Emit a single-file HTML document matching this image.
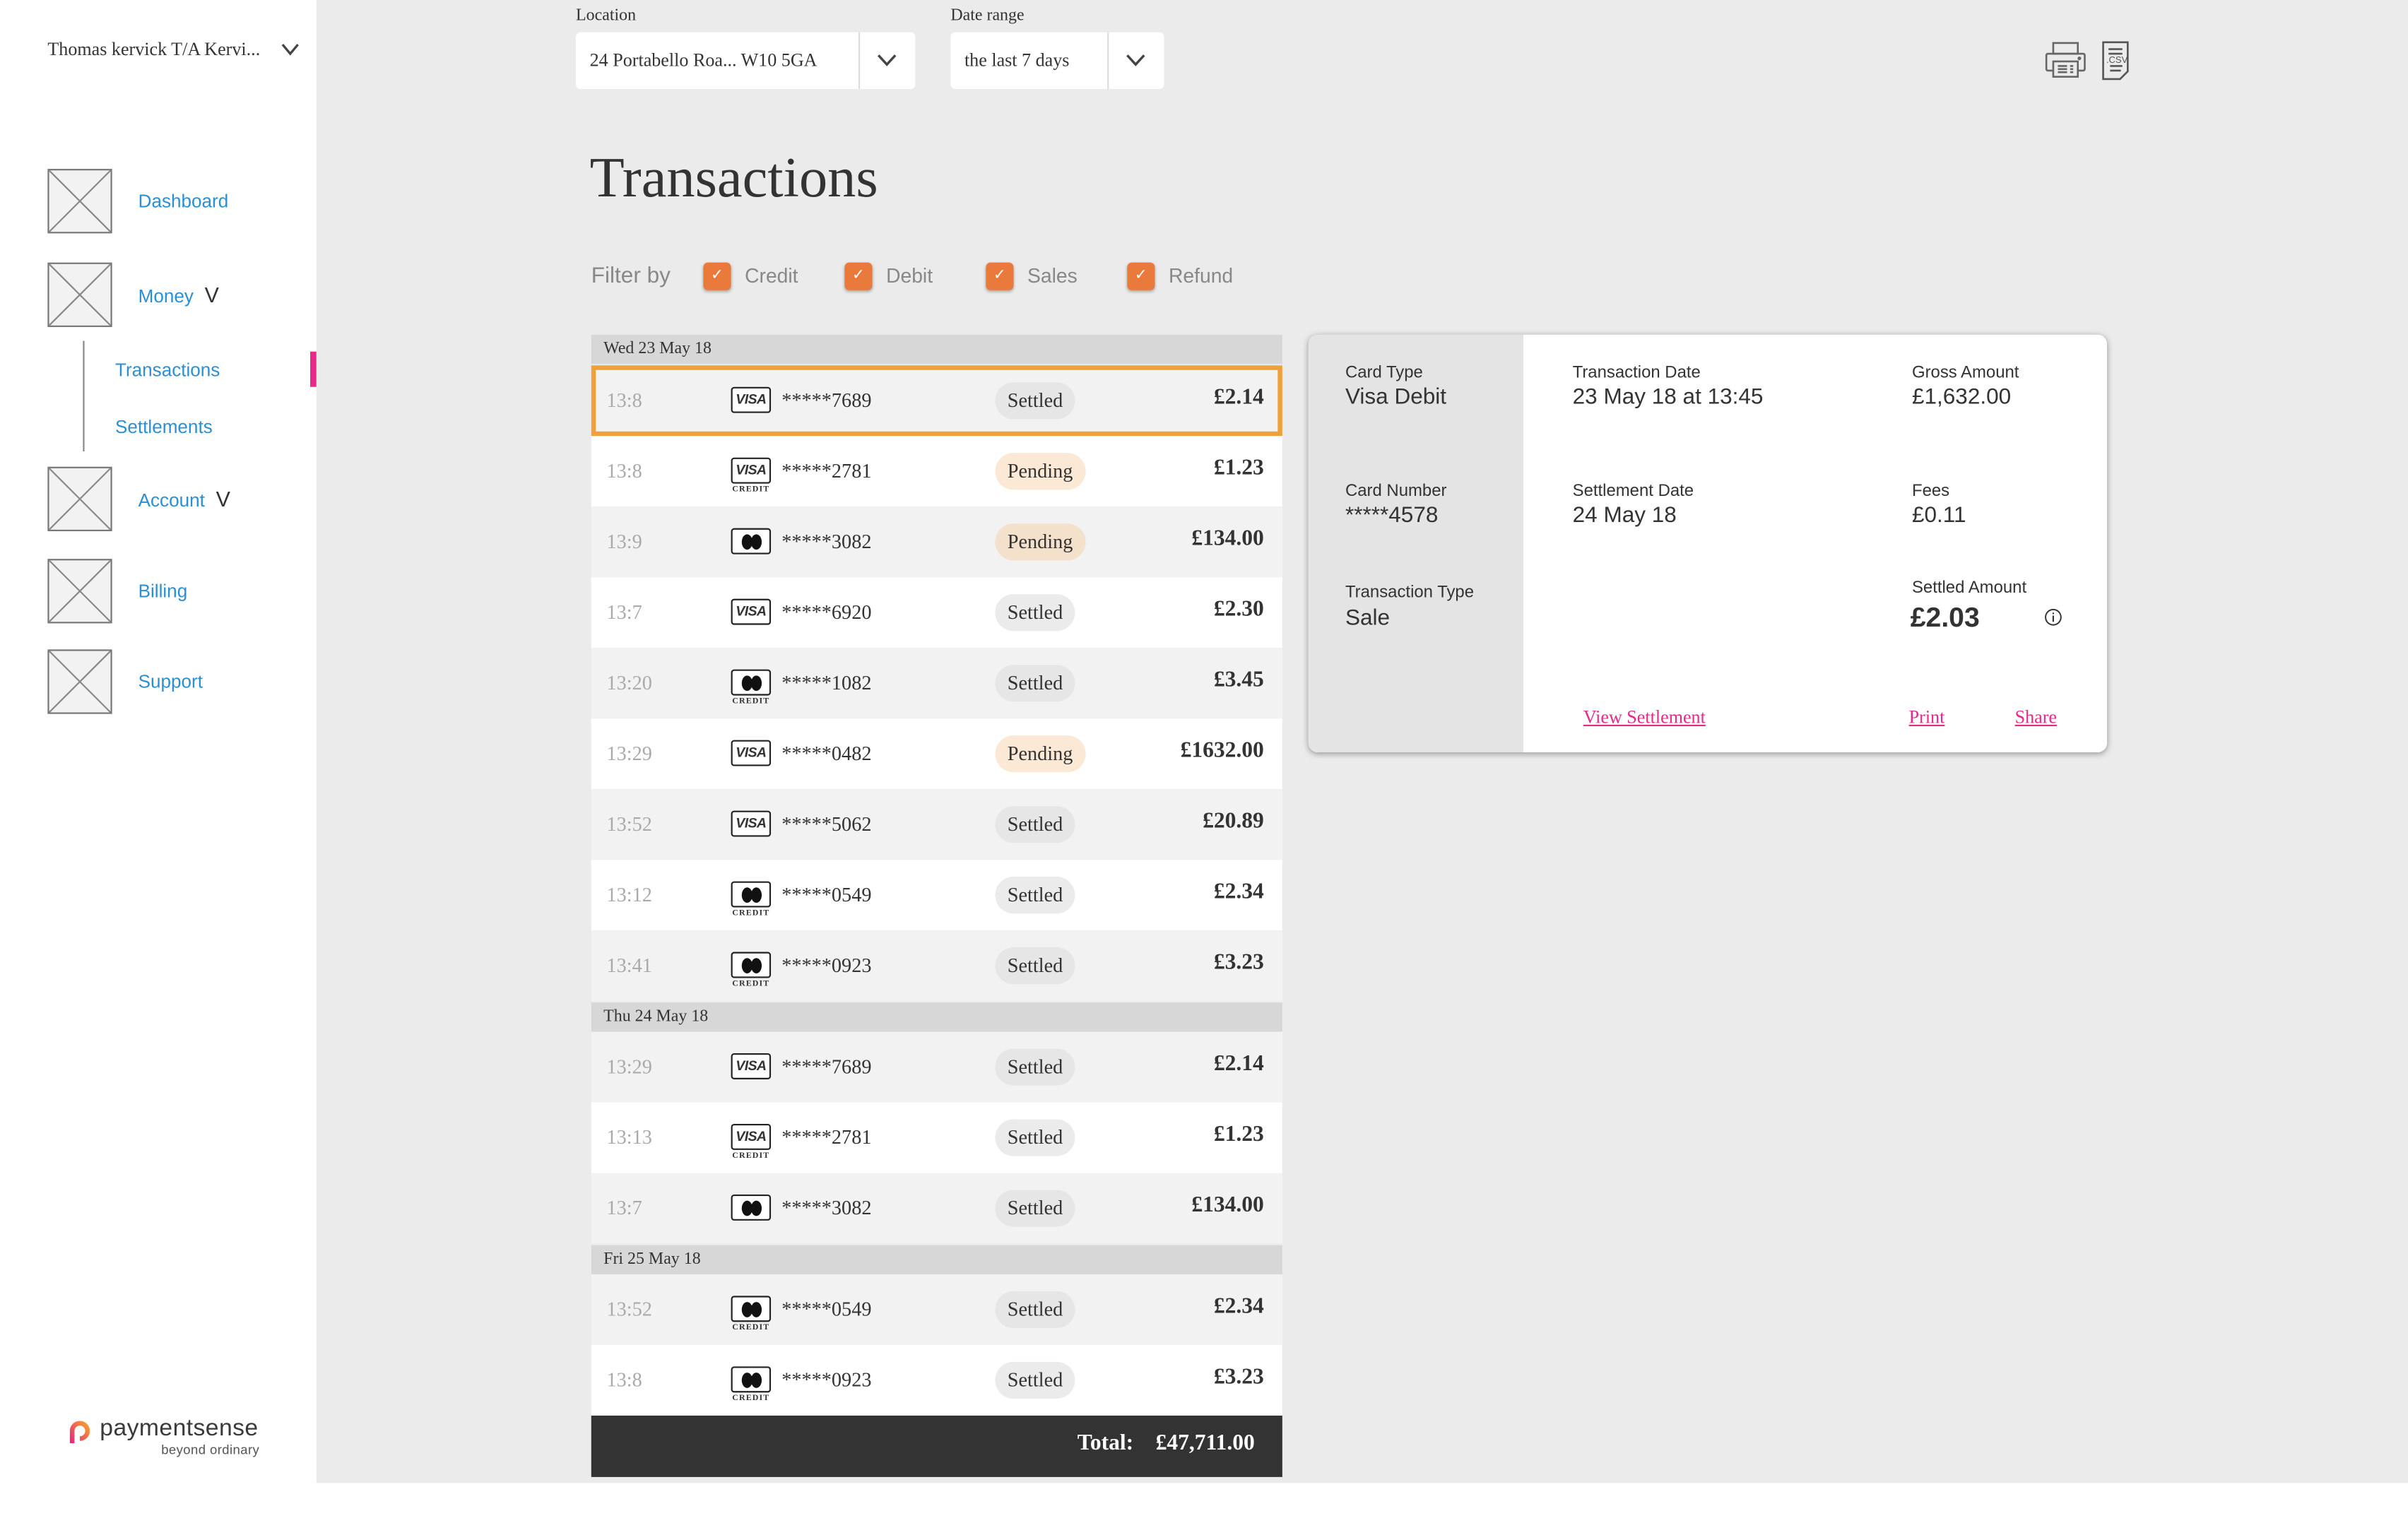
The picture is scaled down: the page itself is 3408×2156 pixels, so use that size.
<!DOCTYPE html>
<html><head><meta charset="utf-8">
<style>
*{margin:0;padding:0;box-sizing:border-box}
html,body{width:3408px;height:2156px;overflow:hidden;background:#fff}
#w{position:absolute;left:0;top:0;width:1568px;height:992px;transform:scale(2.17347);transform-origin:0 0;font-family:"Liberation Serif",serif;color:#333}
.a{position:absolute}
.sans{font-family:"Liberation Sans",sans-serif}
.ph{position:absolute;left:31px;width:42px;height:42px;border:1px solid #777;background:#f2f2f2}
.nav{position:absolute;left:90px;font-family:"Liberation Sans",sans-serif;font-size:12px;color:#2a8fd4}
.sel{position:absolute;top:21px;height:37px;background:#fff;border-radius:3px;font-size:12px;line-height:37px;padding-left:9px}
.cb{position:absolute;top:171px;width:18px;height:18px;background:#ea7a3c;border-radius:3px;box-shadow:0 1px 2px rgba(0,0,0,.3);color:#fff;font-size:10px;text-align:center;line-height:18px;font-family:"Liberation Sans",sans-serif}
.cl{position:absolute;top:172px;font-family:"Liberation Sans",sans-serif;font-size:13px;color:#888}
.dh{position:absolute;left:385px;width:450px;height:19px;background:#d7d7d7;font-size:11px;line-height:19px;padding-left:8px}
.r{position:absolute;left:385px;width:450px;height:46px}
.g{background:#f2f2f2}.wh{background:#fff}
.r .t{position:absolute;left:10px;top:15px;font-size:13px;color:#aaa}
.r .c{position:absolute;left:91px;top:14px;width:26px;height:17px;border:1px solid #222;border-radius:2px;background:#fff;font-family:"Liberation Sans",sans-serif;font-weight:bold;font-style:italic;font-size:9px;text-align:center;line-height:15px;letter-spacing:-.3px}
.r .mc i{position:absolute;top:2.5px;width:7px;height:10px;border-radius:50%;background:#111}
.r .cr{position:absolute;left:91px;top:32px;width:26px;text-align:center;font-size:5.5px;letter-spacing:.5px;font-weight:bold;color:#333}
.r .n{position:absolute;left:124px;top:15px;font-size:13px}
.r .s{position:absolute;left:263px;top:11px;height:24px;line-height:24px;padding:0 8px;border-radius:12px;font-size:13px;background:#e6e6e6}
.r .s.p{background:#fbe9d6}
.r .m{position:absolute;right:12px;top:13px;font-size:14.5px;font-weight:bold}
.lb{position:absolute;font-family:"Liberation Sans",sans-serif;font-size:11px;color:#333}
.vl{position:absolute;font-family:"Liberation Sans",sans-serif;font-size:14.5px;color:#333}
.lk{position:absolute;top:460px;font-size:12px;color:#e8288a;text-decoration:underline}
</style></head><body><div id="w">
<div class="a" style="left:206px;top:0;width:1362px;height:966px;background:#ebebeb"></div>
<div class="a" style="left:31px;top:25px;font-size:12px">Thomas kervick T/A Kervi...</div>
<svg class="a" style="left:183px;top:28px" width="12" height="9"><path d="M1 1l5 6 5-6" stroke="#444" stroke-width="1.5" fill="none"/></svg>
<div class="ph" style="top:110px"><svg width="40" height="40"><path d="M0 0L40 40M40 0L0 40" stroke="#888"/></svg></div>
<div class="ph" style="top:171px"><svg width="40" height="40"><path d="M0 0L40 40M40 0L0 40" stroke="#888"/></svg></div>
<div class="ph" style="top:304px"><svg width="40" height="40"><path d="M0 0L40 40M40 0L0 40" stroke="#888"/></svg></div>
<div class="ph" style="top:364px"><svg width="40" height="40"><path d="M0 0L40 40M40 0L0 40" stroke="#888"/></svg></div>
<div class="ph" style="top:423px"><svg width="40" height="40"><path d="M0 0L40 40M40 0L0 40" stroke="#888"/></svg></div>
<div class="nav" style="top:124px">Dashboard</div>
<div class="nav" style="top:184px">Money <span style="color:#333;font-size:14px">&nbsp;V</span></div>
<div class="nav" style="top:317px">Account <span style="color:#333;font-size:14px">&nbsp;V</span></div>
<div class="nav" style="top:378px">Billing</div>
<div class="nav" style="top:437px">Support</div>
<div class="a" style="left:54px;top:222px;width:1px;height:72px;background:#888"></div>
<div class="nav" style="left:75px;top:234px">Transactions</div>
<div class="nav" style="left:75px;top:271px">Settlements</div>
<div class="a" style="left:202px;top:229px;width:4px;height:23px;background:#e8288a"></div>
<svg class="a" style="left:44px;top:925px" width="16" height="16"><defs><linearGradient id="lg" x1="0" y1="1" x2="1" y2="0"><stop offset="0" stop-color="#e8287a"/><stop offset="1" stop-color="#f5a030"/></linearGradient></defs><path d="M3 15V7a5 5 0 1 1 5 5" stroke="url(#lg)" stroke-width="3" fill="none"/></svg>
<div class="a sans" style="left:65px;top:922px;font-size:15.5px;color:#3a3a3a;letter-spacing:.2px">paymentsense</div>
<div class="a sans" style="left:105px;top:939px;font-size:8.5px;color:#555;letter-spacing:.2px">beyond ordinary</div>

<div class="a" style="left:375px;top:4px;font-size:11px">Location</div>
<div class="sel" style="left:375px;width:221px">24 Portabello Roa... W10 5GA</div>
<div class="a" style="left:559px;top:21px;width:1px;height:37px;background:#ddd"></div>
<svg class="a" style="left:571px;top:35px" width="13" height="9"><path d="M1 1l5.5 6 5.5-6" stroke="#444" stroke-width="1.6" fill="none"/></svg>
<div class="a" style="left:619px;top:4px;font-size:11px">Date range</div>
<div class="sel" style="left:619px;width:139px">the last 7 days</div>
<div class="a" style="left:721px;top:21px;width:1px;height:37px;background:#ddd"></div>
<svg class="a" style="left:733px;top:35px" width="13" height="9"><path d="M1 1l5.5 6 5.5-6" stroke="#444" stroke-width="1.6" fill="none"/></svg>
<svg class="a" style="left:1331px;top:26px" width="28" height="26" fill="none" stroke="#666" stroke-width="1.2"><rect x="6" y="2" width="16" height="7"/><rect x="1.5" y="9" width="25" height="11" rx="1"/><rect x="6" y="14" width="16" height="10" fill="#ebebeb"/><path d="M9 17h6M9 19h6M9 21h6M17 17h2M17 19h2M17 21h2"/><circle cx="23" cy="12" r=".6" fill="#666"/></svg>
<svg class="a" style="left:1368px;top:26px" width="20" height="27" fill="none" stroke="#555" stroke-width="1.2"><path d="M1.5 1.5h16v19l-5 5h-11z"/><path d="M5 6h9M5 9h9M6 20h7M6 17h8"/><text x="3.5" y="15" font-size="6" font-family="Liberation Sans" fill="#555" stroke="none">.CSV</text></svg>

<div class="a" style="left:384px;top:95px;font-size:37px;color:#333">Transactions</div>
<div class="a sans" style="left:385px;top:172px;font-size:14.5px;color:#888">Filter by</div>
<div class="cb" style="left:458px">✓</div><div class="cl" style="left:485px">Credit</div>
<div class="cb" style="left:550px">✓</div><div class="cl" style="left:577px">Debit</div>
<div class="cb" style="left:642px">✓</div><div class="cl" style="left:669px">Sales</div>
<div class="cb" style="left:734px">✓</div><div class="cl" style="left:761px">Refund</div>

<div class="dh" style="top:218px">Wed 23 May 18</div>
<div class="r g" style="top:238px;border:3px solid #f0a03a"><div style="position:absolute;left:-3px;top:-3px;width:450px;height:46px">
<span class="t">13:8</span><span class="c">VISA</span><span class="n">*****7689</span><span class="s">Settled</span><span class="m">£2.14</span></div></div>
<div class="r wh" style="top:284px"><span class="t">13:8</span><span class="c">VISA</span><span class="cr">CREDIT</span><span class="n">*****2781</span><span class="s p">Pending</span><span class="m">£1.23</span></div>
<div class="r g" style="top:330px"><span class="t">13:9</span><span class="c mc"><i style="left:5.5px"></i><i style="left:11.5px"></i></span><span class="n">*****3082</span><span class="s p" style="background:#f3e1cc">Pending</span><span class="m">£134.00</span></div>
<div class="r wh" style="top:376px"><span class="t">13:7</span><span class="c">VISA</span><span class="n">*****6920</span><span class="s" style="background:#ebebeb">Settled</span><span class="m">£2.30</span></div>
<div class="r g" style="top:422px"><span class="t">13:20</span><span class="c mc"><i style="left:5.5px"></i><i style="left:11.5px"></i></span><span class="cr">CREDIT</span><span class="n">*****1082</span><span class="s">Settled</span><span class="m">£3.45</span></div>
<div class="r wh" style="top:468px"><span class="t">13:29</span><span class="c">VISA</span><span class="n">*****0482</span><span class="s p">Pending</span><span class="m">£1632.00</span></div>
<div class="r g" style="top:514px"><span class="t">13:52</span><span class="c">VISA</span><span class="n">*****5062</span><span class="s">Settled</span><span class="m">£20.89</span></div>
<div class="r wh" style="top:560px"><span class="t">13:12</span><span class="c mc"><i style="left:5.5px"></i><i style="left:11.5px"></i></span><span class="cr">CREDIT</span><span class="n">*****0549</span><span class="s" style="background:#ebebeb">Settled</span><span class="m">£2.34</span></div>
<div class="r g" style="top:606px"><span class="t">13:41</span><span class="c mc"><i style="left:5.5px"></i><i style="left:11.5px"></i></span><span class="cr">CREDIT</span><span class="n">*****0923</span><span class="s">Settled</span><span class="m">£3.23</span></div>
<div class="dh" style="top:653px">Thu 24 May 18</div>
<div class="r g" style="top:672px"><span class="t">13:29</span><span class="c">VISA</span><span class="n">*****7689</span><span class="s">Settled</span><span class="m">£2.14</span></div>
<div class="r wh" style="top:718px"><span class="t">13:13</span><span class="c">VISA</span><span class="cr">CREDIT</span><span class="n">*****2781</span><span class="s" style="background:#ebebeb">Settled</span><span class="m">£1.23</span></div>
<div class="r g" style="top:764px"><span class="t">13:7</span><span class="c mc"><i style="left:5.5px"></i><i style="left:11.5px"></i></span><span class="n">*****3082</span><span class="s">Settled</span><span class="m">£134.00</span></div>
<div class="dh" style="top:811px">Fri 25 May 18</div>
<div class="r g" style="top:830px"><span class="t">13:52</span><span class="c mc"><i style="left:5.5px"></i><i style="left:11.5px"></i></span><span class="cr">CREDIT</span><span class="n">*****0549</span><span class="s">Settled</span><span class="m">£2.34</span></div>
<div class="r wh" style="top:876px"><span class="t">13:8</span><span class="c mc"><i style="left:5.5px"></i><i style="left:11.5px"></i></span><span class="cr">CREDIT</span><span class="n">*****0923</span><span class="s" style="background:#ebebeb">Settled</span><span class="m">£3.23</span></div>
<div class="a" style="left:385px;top:922px;width:450px;height:40px;background:#333;color:#fff;font-weight:bold;font-size:14.5px;line-height:36px;text-align:right;padding-right:18px">Total:&nbsp;&nbsp;&nbsp;&nbsp;£47,711.00</div>

<div class="a" style="left:852px;top:218px;width:520px;height:272px;background:#fff;border-radius:6px;box-shadow:0 1px 4px rgba(0,0,0,.35);overflow:hidden"><div style="width:140px;height:272px;background:#e4e4e4"></div></div>
<div class="lb" style="left:876px;top:237px">Card Type</div><div class="vl" style="left:876px;top:251px">Visa Debit</div>
<div class="lb" style="left:876px;top:314px">Card Number</div><div class="vl" style="left:876px;top:328px">*****4578</div>
<div class="lb" style="left:876px;top:380px">Transaction Type</div><div class="vl" style="left:876px;top:395px">Sale</div>
<div class="lb" style="left:1024px;top:237px">Transaction Date</div><div class="vl" style="left:1024px;top:251px">23 May 18 at 13:45</div>
<div class="lb" style="left:1024px;top:314px">Settlement Date</div><div class="vl" style="left:1024px;top:328px">24 May 18</div>
<div class="lb" style="left:1245px;top:237px">Gross Amount</div><div class="vl" style="left:1245px;top:251px">£1,632.00</div>
<div class="lb" style="left:1245px;top:314px">Fees</div><div class="vl" style="left:1245px;top:328px">£0.11</div>
<div class="lb" style="left:1245px;top:377px">Settled Amount</div><div class="vl" style="left:1244px;top:392px;font-size:18px;font-weight:bold">£2.03</div>
<svg class="a" style="left:1331px;top:396px" width="12" height="12"><circle cx="6" cy="6" r="5" fill="none" stroke="#333" stroke-width=".9"/><path d="M6 5v4M6 3v1" stroke="#333"/></svg>
<div class="lk" style="left:1031px">View Settlement</div>
<div class="lk" style="left:1243px">Print</div>
<div class="lk" style="left:1312px">Share</div>
</div></body></html>
